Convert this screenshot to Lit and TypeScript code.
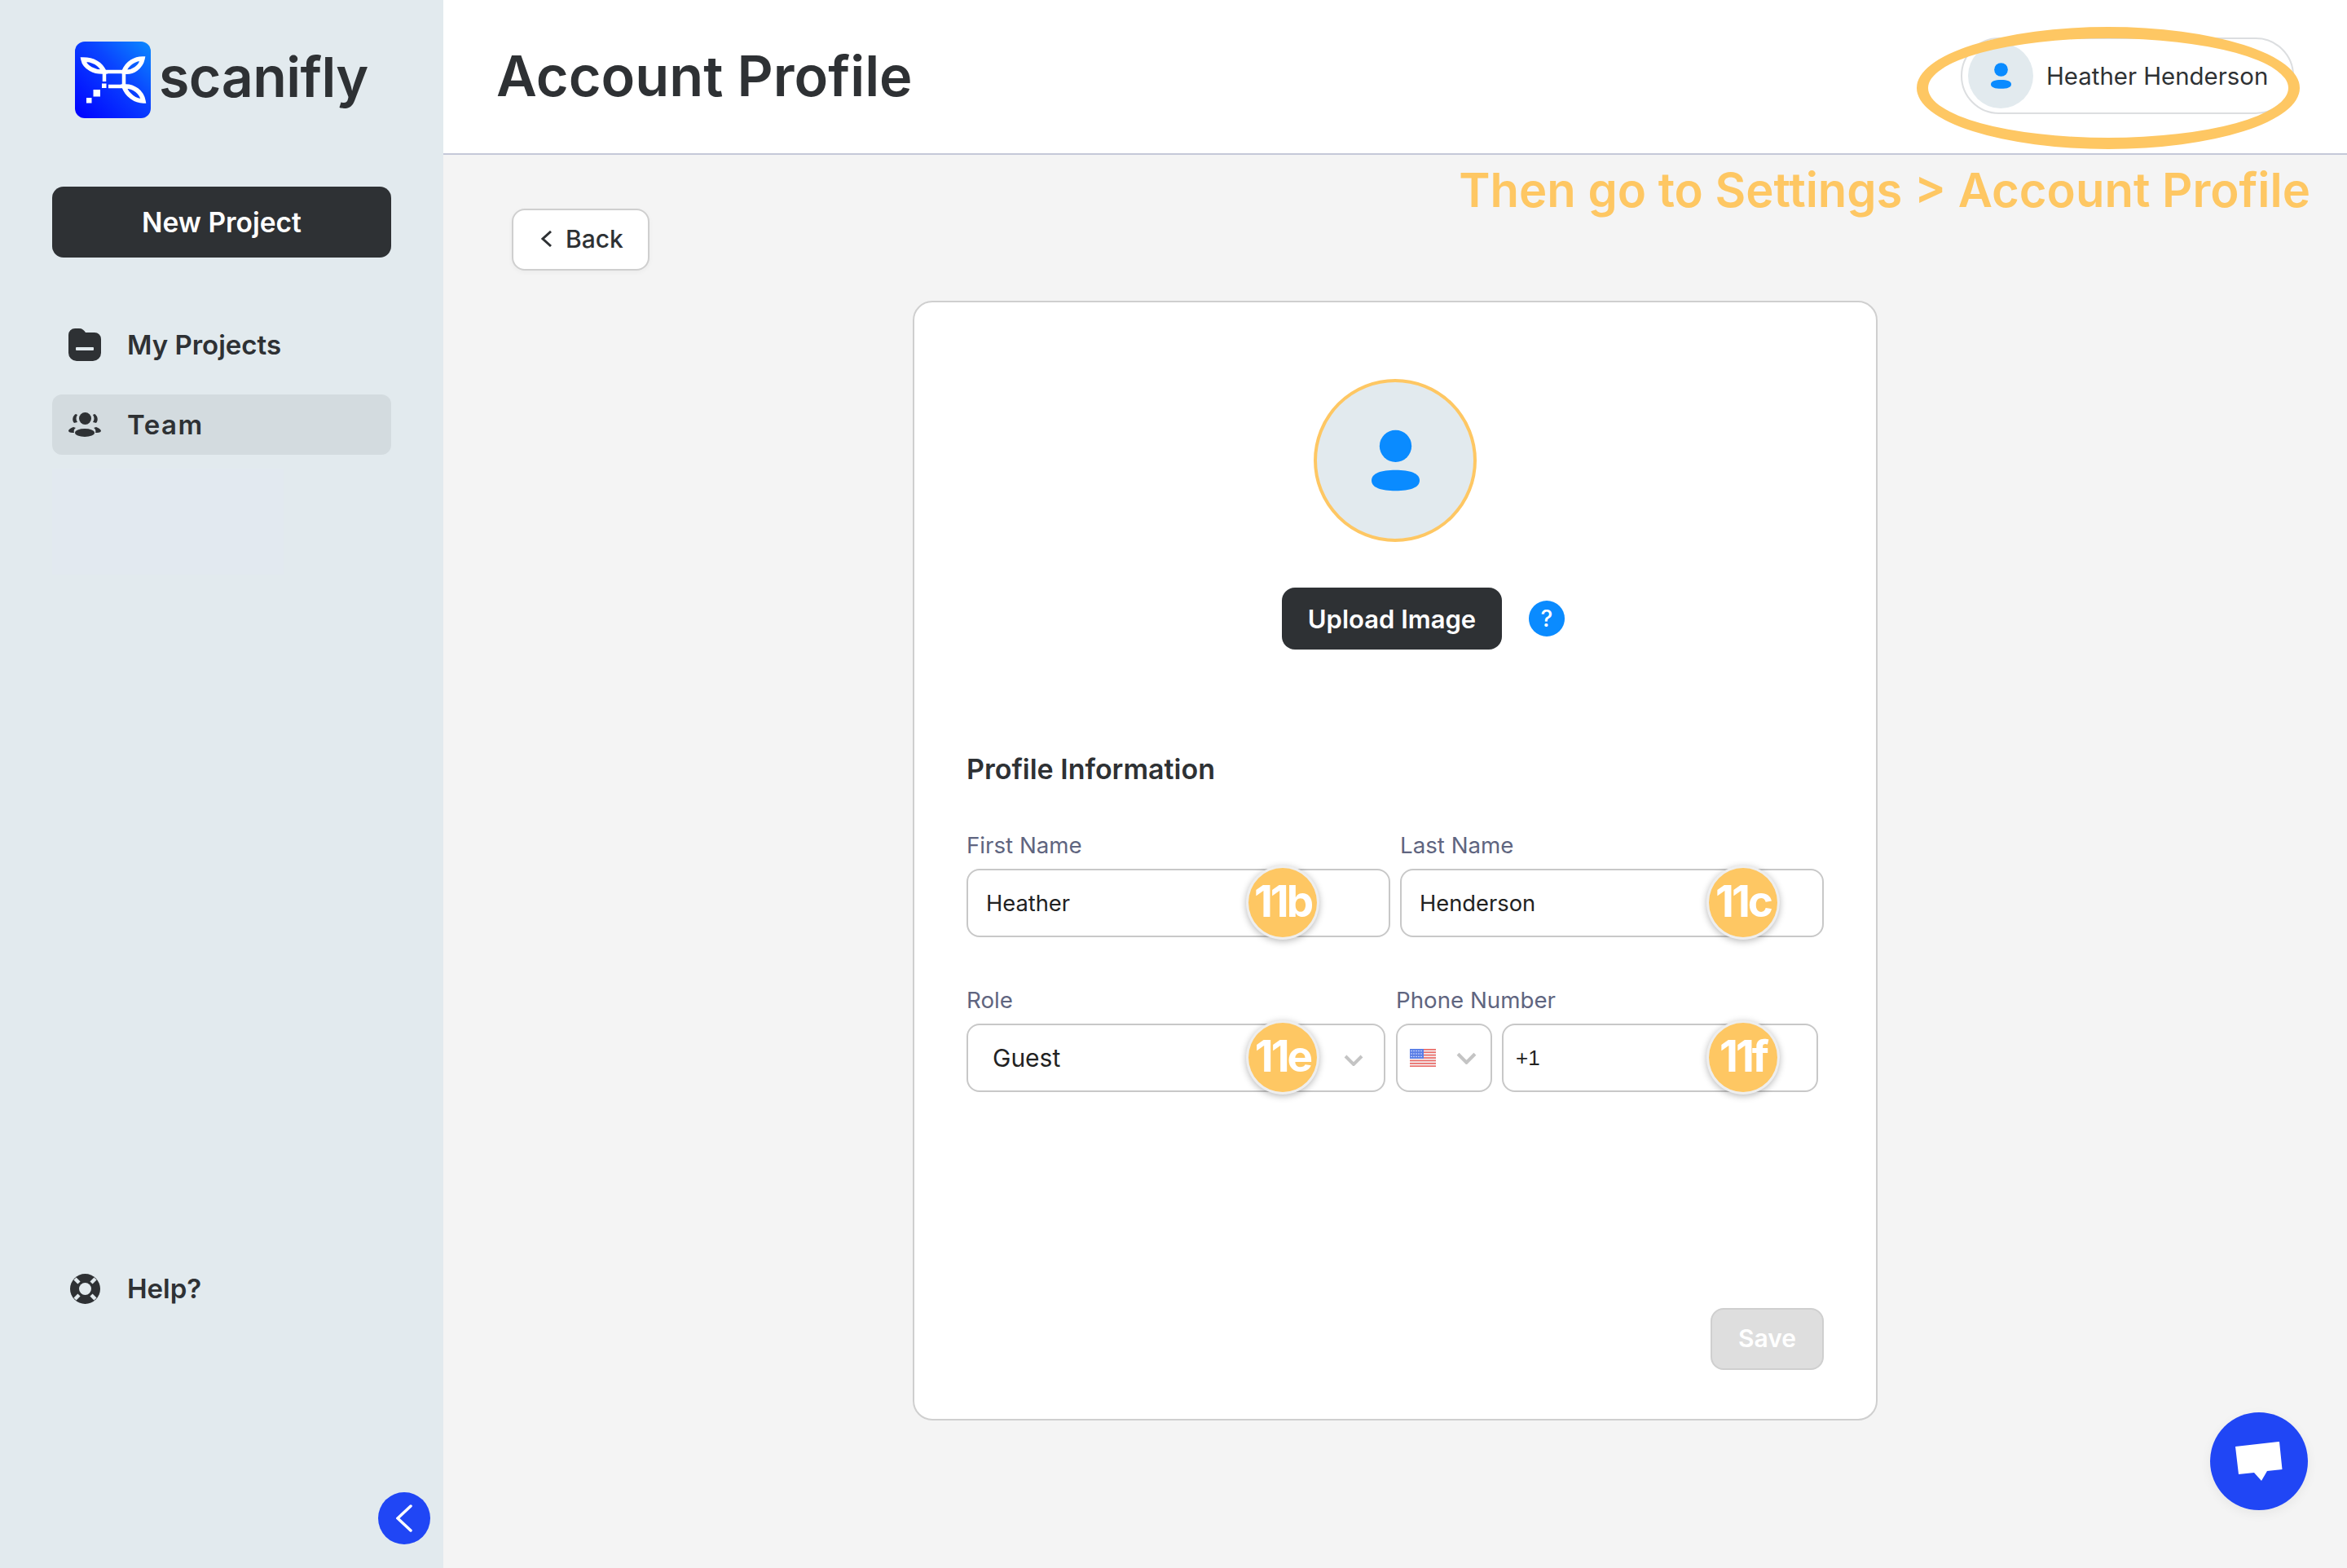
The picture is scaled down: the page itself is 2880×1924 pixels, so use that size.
import { customElement } from "lit/decorators.js";
import { html, css, LitElement, svg } from "lit";

const personIcon = (cls: string) => html`
  <svg class="${cls}" viewBox="0 0 60 76" fill="#0a8bff">
    <circle cx="30" cy="20" r="20"></circle>
    <path d="M0 63C0 54 12 50 30 50C48 50 60 54 60 63C60 72 48 76 30 76C12 76 0 72 0 63Z"></path>
  </svg>
`;

const chevronDown = (cls: string) => html`
  <svg class="${cls}" viewBox="0 0 24 14" fill="none" stroke="#c4c4c4" stroke-width="4">
    <path d="M2 2L12 12L22 2"></path>
  </svg>
`;

// the little flag is only 32px wide, so stripes and stars are generated
const flagStripes = [0, 2, 4, 6, 8, 10, 12].map(
  (i) => svg`<rect y="${i * 1.7}" width="32" height="1.7" fill="#ea6a66"></rect>`
);
const flagStars = [2, 5, 8, 11, 14].flatMap((x) =>
  [2.5, 6, 9.5].map((y) => svg`<circle cx="${x}" cy="${y}" r="0.8" fill="#e6ecff"></circle>`)
);

@customElement("app-root")
export class AppRoot extends LitElement {
  static styles = css`
    * {
      box-sizing: border-box;
    }

    :host {
      display: block;
      position: relative;
      width: 2880px;
      height: 1924px;
      overflow: hidden;
      font-family: "Inter", "Liberation Sans", sans-serif;
      color: #2e3134;
    }

    .layout {
      display: grid;
      grid-template-columns: 544px 1fr;
      height: 100%;
    }

    /* sidebar */
    .sidebar {
      display: flex;
      flex-direction: column;
      background: #e2eaee;
      padding: 51px 64px 29px;
    }

    .logo {
      display: flex;
      align-items: center;
      gap: 10px;
      height: 94px;
      margin-left: 28px;
    }

    .logo-mark {
      width: 93px;
      height: 94px;
    }

    .logo-text {
      margin-top: -8px;
      font-size: 68px;
      font-weight: 600;
      letter-spacing: -0.5px;
      line-height: 94px;
    }

    .new-project {
      display: flex;
      align-items: center;
      justify-content: center;
      height: 87px;
      margin-top: 84px;
      background: #2e3134;
      border-radius: 14px;
      color: #fff;
      font-size: 33.5px;
      font-weight: 600;
    }

    .nav {
      display: flex;
      flex-direction: column;
      gap: 24px;
      margin-top: 70px;
    }

    .nav-item {
      display: flex;
      align-items: center;
      height: 74px;
      padding-left: 20px;
      border-radius: 12px;
      font-size: 33px;
      font-weight: 600;
    }

    .nav-item.active {
      background: #d3dbdf;
      letter-spacing: 1.5px;
    }

    .nav-icon {
      display: flex;
      justify-content: center;
      width: 40px;
      margin-right: 32px;
    }

    .blur-patch {
      width: 284px;
      height: 130px;
      margin-top: 17px;
      background: #e2e9f0;
    }

    .help {
      margin-top: auto;
    }

    .collapse {
      display: flex;
      align-items: center;
      justify-content: center;
      align-self: flex-end;
      width: 64px;
      height: 64px;
      margin-top: 213px;
      margin-right: -48px;
      border-radius: 50%;
      background: #2046f5;
    }

    /* main column */
    .main {
      display: flex;
      flex-direction: column;
      background: #f4f4f4;
    }

    .header {
      display: flex;
      align-items: center;
      justify-content: space-between;
      height: 190px;
      padding: 0 65px 2px 65px;
      background: #fff;
      border-bottom: 2px solid #c5c8d8;
    }

    .title {
      margin: 0;
      font-size: 68.5px;
      font-weight: 600;
    }

    .user {
      display: flex;
      align-items: center;
      gap: 16px;
      width: 409px;
      height: 94px;
      padding-left: 7px;
      border: 2px solid #dcdee0;
      border-radius: 47px;
      font-size: 29.4px;
    }

    .user-avatar {
      display: flex;
      align-items: center;
      justify-content: center;
      width: 80px;
      height: 80px;
      border-radius: 50%;
      background: #e2eaee;
    }

    .person-small {
      width: 25px;
      height: 32px;
    }

    .content {
      display: flex;
      flex-direction: column;
      align-items: flex-start;
      padding: 66px 0 0 84px;
    }

    .back {
      display: flex;
      align-items: center;
      gap: 17px;
      width: 169px;
      height: 76px;
      padding: 0 0 2px 34px;
      background: #fff;
      border: 2px solid #cfcfcf;
      border-radius: 16px;
      box-shadow: 0 2px 6px rgba(0, 0, 0, 0.04);
      font-size: 30px;
      font-weight: 500;
    }

    .card {
      display: flex;
      flex-direction: column;
      width: 1184px;
      height: 1374px;
      margin: 37px 0 0 492px;
      padding: 94px 64px 60px 64px;
      background: #fff;
      border: 2px solid #cfcfcf;
      border-radius: 24px;
    }

    .avatar {
      display: flex;
      align-items: center;
      justify-content: center;
      width: 200px;
      height: 200px;
      margin-left: 426px;
      border: 4px solid #fec763;
      border-radius: 50%;
      background: #e2eaee;
    }

    .person-big {
      width: 59px;
      height: 76px;
    }

    .upload-row {
      display: flex;
      align-items: center;
      gap: 33px;
      margin: 56px 0 0 387px;
    }

    .upload {
      display: flex;
      align-items: center;
      justify-content: center;
      width: 270px;
      height: 76px;
      background: #2e3134;
      border-radius: 16px;
      color: #fff;
      font-size: 31px;
      font-weight: 600;
    }

    .question {
      display: flex;
      align-items: center;
      justify-content: center;
      width: 44px;
      height: 44px;
      border-radius: 50%;
      background: #0a8bff;
      color: #fff;
      font-size: 28px;
      font-weight: 500;
    }

    .section-title {
      margin: 123px 0 0;
      font-size: 34px;
      font-weight: 600;
      line-height: 48px;
    }

    .row {
      display: flex;
    }

    .row.first {
      gap: 12px;
      margin-top: 51px;
    }

    .row.second {
      gap: 13px;
      margin-top: 59px;
    }

    .field {
      display: flex;
      flex-direction: column;
      gap: 11px;
    }

    .field label {
      height: 36px;
      color: #5f6580;
      font-size: 27.7px;
      line-height: 36px;
    }

    .w-name {
      width: 520px;
    }

    .w-role {
      width: 514px;
    }

    .w-phone {
      width: 518px;
    }

    .phone-boxes {
      display: flex;
      gap: 12px;
    }

    .box {
      position: relative;
      display: flex;
      align-items: center;
      height: 84px;
      padding-left: 22px;
      background: #fff;
      border: 2px solid #c8c8c8;
      border-radius: 16px;
      color: #222;
      font-size: 27.3px;
    }

    .box.role {
      padding-left: 30px;
      font-size: 30px;
    }

    .box.flag {
      width: 118px;
      flex: none;
      padding-left: 15px;
    }

    .box.number {
      width: 388px;
      padding-left: 15px;
      font-family: "Liberation Sans", sans-serif;
      font-size: 26px;
    }

    .flag-icon {
      width: 32px;
      height: 22px;
    }

    .chev-role {
      position: absolute;
      right: 25px;
      top: 36px;
      width: 24px;
      height: 14px;
    }

    .chev-flag {
      width: 25px;
      height: 15px;
      margin-left: 25px;
    }

    .badge {
      position: absolute;
      top: -6px;
      display: flex;
      align-items: center;
      justify-content: center;
      width: 90px;
      height: 91px;
      padding-bottom: 3px;
      background: #fec763;
      border: 3px solid #eeeeee;
      border-radius: 50%;
      box-shadow: 0 2px 8px rgba(0, 0, 0, 0.28);
      color: #fff;
      font-family: "Inter", sans-serif;
      font-size: 53px;
      font-weight: 700;
      letter-spacing: -3px;
    }

    .badge.b,
    .badge.e {
      left: 341px;
    }

    .badge.c {
      left: 374px;
    }

    .badge.f {
      left: 249px;
    }

    .save {
      display: flex;
      align-items: center;
      justify-content: center;
      align-self: flex-end;
      width: 139px;
      height: 76px;
      margin-top: auto;
      padding-bottom: 2px;
      background: #dedede;
      border: 2px solid #cfcfcf;
      border-radius: 16px;
      color: #fff;
      font-size: 30px;
      font-weight: 600;
    }

    /* walkthrough overlays */
    .ring {
      position: absolute;
      left: 2352px;
      top: 33px;
      width: 470px;
      height: 150px;
      border: 14px solid #fec763;
      border-radius: 50%;
    }

    .hint {
      position: absolute;
      right: 45px;
      top: 198px;
      color: #fec763;
      font-size: 58px;
      font-weight: 600;
      line-height: 70px;
      white-space: nowrap;
    }

    .chat {
      position: absolute;
      left: 2712px;
      top: 1733px;
      display: flex;
      align-items: center;
      justify-content: center;
      width: 120px;
      height: 120px;
      border-radius: 50%;
      background: #2046f5;
      box-shadow: 0 4px 14px rgba(0, 0, 0, 0.06);
    }
  `;

  render() {
    return html`
      <div class="layout">
        <aside class="sidebar">
          <div class="logo">
            <svg class="logo-mark" viewBox="0 0 93 94">
              <defs>
                <linearGradient id="logo-grad" x1="0" y1="1" x2="1" y2="0">
                  <stop offset="0" stop-color="#0000ff"></stop>
                  <stop offset="0.6" stop-color="#0a45ff"></stop>
                  <stop offset="1" stop-color="#0a8bff"></stop>
                </linearGradient>
              </defs>
              <rect width="93" height="94" rx="12" fill="url(#logo-grad)"></rect>
              <g fill="none" stroke="#fff" stroke-width="5.5">
                <path d="M36 37C30 25 20 22 10 22C12 32 24 38 36 37Z"></path>
                <path d="M60 37C64 26 74 21 83 21C81 31 71 39 60 37Z"></path>
                <path d="M60 55C64 66 74 73 84 73C82 62 72 54 60 55Z"></path>
              </g>
              <g fill="none" stroke="#fff" stroke-width="4.5">
                <path d="M36 37H60V55H41"></path>
                <path d="M36 39V49"></path>
              </g>
              <g fill="#fff">
                <rect x="33" y="51.5" width="5.5" height="5.5"></rect>
                <rect x="22.5" y="59" width="8.5" height="8.5"></rect>
                <rect x="14" y="69" width="6.5" height="6.5"></rect>
              </g>
            </svg>
            <span class="logo-text">scanifly</span>
          </div>

          <div class="new-project">New Project</div>

          <nav class="nav">
            <div class="nav-item">
              <span class="nav-icon">
                <svg width="40" height="40" viewBox="0 0 40 40">
                  <path
                    fill="#2e3134"
                    d="M0 8A8 8 0 0 1 8 0H13C17 0 19 2 21 5H32A8 8 0 0 1 40 13V30A10 10 0 0 1 30 40H10A10 10 0 0 1 0 30Z"
                  ></path>
                  <rect x="9" y="23" width="22" height="4" rx="1" fill="#e2eaee"></rect>
                </svg>
              </span>
              My Projects
            </div>
            <div class="nav-item active">
              <span class="nav-icon">
                <svg width="40" height="30" viewBox="0 0 40 30" fill="#2e3134">
                  <circle cx="20.5" cy="7.5" r="7.5"></circle>
                  <ellipse cx="20" cy="25" rx="12" ry="5"></ellipse>
                  <path d="M9 2C5 4 4 10 7 13L11 12C9 9 9 6 11 3Z"></path>
                  <path d="M32 2C36 4 37 10 34 13L30 12C32 9 32 6 30 3Z"></path>
                  <path d="M6 18C3 19 0 21 0 23C1 25 4 25 7 25C6 23 7 20 9 19Z"></path>
                  <path d="M34 18C37 19 40 21 40 23C39 25 36 25 33 25C34 23 33 20 31 19Z"></path>
                </svg>
              </span>
              Team
            </div>
          </nav>

          <div class="blur-patch"></div>

          <div class="nav-item help">
            <span class="nav-icon">
              <svg width="37" height="37" viewBox="0 0 37 37">
                <circle cx="18.5" cy="18.5" r="18.5" fill="#2e3134"></circle>
                <circle cx="18.5" cy="18.5" r="7.5" fill="#e2eaee"></circle>
                <g stroke="#e2eaee" stroke-width="4.5">
                  <path d="M6 6L11 11"></path>
                  <path d="M31 6L26 11"></path>
                  <path d="M6 31L11 26"></path>
                  <path d="M31 31L26 26"></path>
                </g>
              </svg>
            </span>
            Help?
          </div>

          <div class="collapse">
            <svg width="20" height="34" viewBox="0 0 20 34" fill="none" stroke="#fff" stroke-width="3.5" stroke-linecap="round">
              <path d="M18 2L2 17L18 32"></path>
            </svg>
          </div>
        </aside>

        <div class="main">
          <header class="header">
            <h1 class="title">Account Profile</h1>
            <div class="user">
              <span class="user-avatar">${personIcon("person-small")}</span>
              Heather Henderson
            </div>
          </header>

          <section class="content">
            <div class="back">
              <svg width="13" height="20" viewBox="0 0 13 20" fill="none" stroke="#2e3134" stroke-width="3">
                <path d="M12 1L2 10L12 19"></path>
              </svg>
              Back
            </div>

            <div class="card">
              <div class="avatar">${personIcon("person-big")}</div>

              <div class="upload-row">
                <div class="upload">Upload Image</div>
                <div class="question">?</div>
              </div>

              <h2 class="section-title">Profile Information</h2>

              <div class="row first">
                <div class="field w-name">
                  <label>First Name</label>
                  <div class="box">Heather<span class="badge b">11b</span></div>
                </div>
                <div class="field w-name">
                  <label>Last Name</label>
                  <div class="box">Henderson<span class="badge c">11c</span></div>
                </div>
              </div>

              <div class="row second">
                <div class="field w-role">
                  <label>Role</label>
                  <div class="box role">
                    Guest
                    <span class="badge e">11e</span>
                    ${chevronDown("chev-role")}
                  </div>
                </div>
                <div class="field w-phone">
                  <label>Phone Number</label>
                  <div class="phone-boxes">
                    <div class="box flag">
                      <svg class="flag-icon" viewBox="0 0 32 22">
                        <rect width="32" height="22" fill="#f4f4f6"></rect>
                        ${flagStripes}
                        <rect width="17" height="12" fill="#5a7ee6"></rect>
                        ${flagStars}
                      </svg>
                      ${chevronDown("chev-flag")}
                    </div>
                    <div class="box number">+1<span class="badge f">11f</span></div>
                  </div>
                </div>
              </div>

              <div class="save">Save</div>
            </div>
          </section>
        </div>
      </div>

      <div class="ring"></div>
      <div class="hint">Then go to Settings &gt; Account Profile</div>
      <div class="chat">
        <svg width="58" height="48" viewBox="0 0 58 48" fill="#fff">
          <path d="M0 6L54 0L57.5 34L39 36L32 48L23 38L4 40Z"></path>
        </svg>
      </div>
    `;
  }
}

declare global {
  interface HTMLElementTagNameMap {
    "app-root": AppRoot;
  }
}
